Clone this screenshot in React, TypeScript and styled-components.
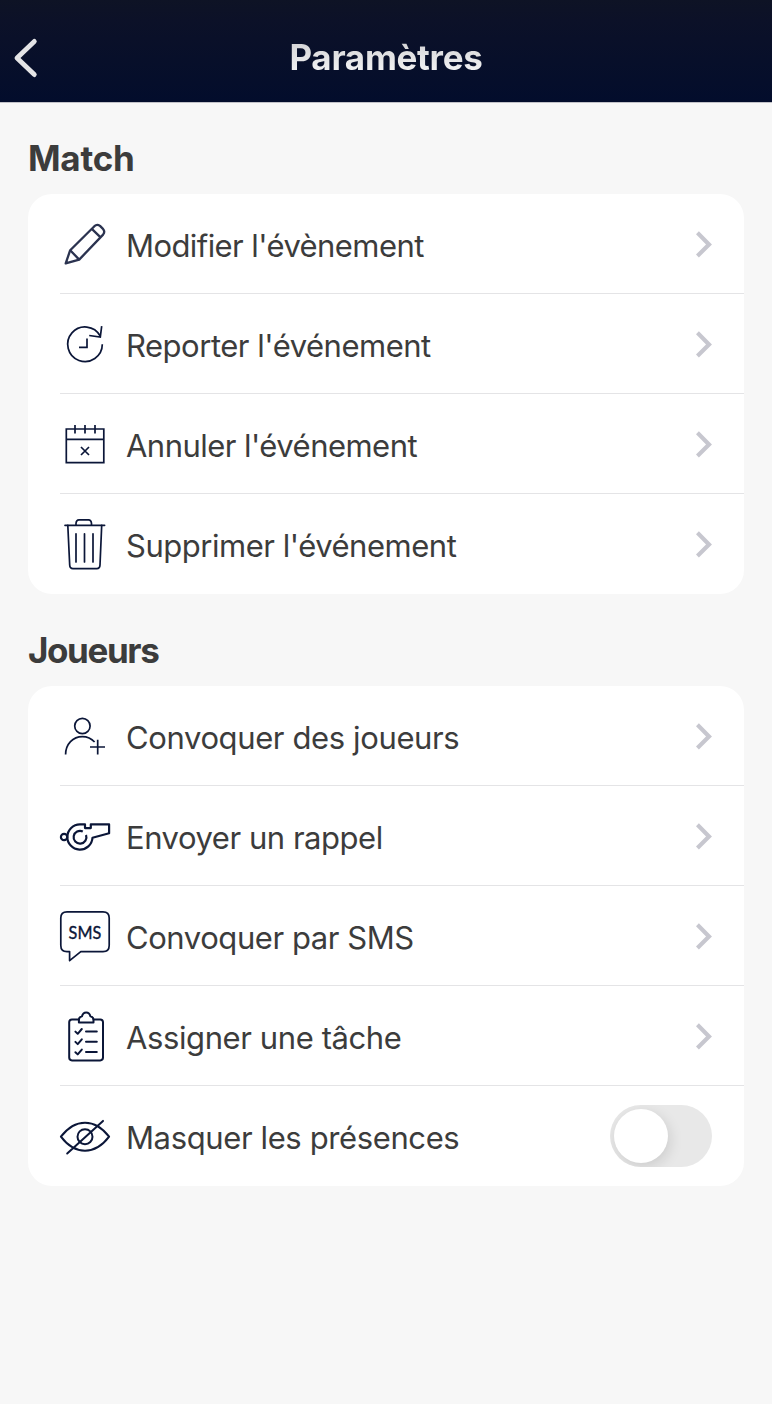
import React, { useState } from 'react';
import styled, { createGlobalStyle } from 'styled-components';

const GlobalStyle = createGlobalStyle`
  * { box-sizing: border-box; }
  body {
    margin: 0;
    background: #f7f7f7;
    font-family: Inter, "Liberation Sans", sans-serif;
    color: #3c3c3c;
  }
`;

const Screen = styled.div`
  min-height: 1404px;
  background: #f7f7f7;
`;

const Header = styled.header`
  display: grid;
  grid-template-columns: 52px 1fr 52px;
  height: 103px;
  padding-top: 12px;
  background: linear-gradient(#0e1325 0, #0c1128 20px, #030d2c 101px);
  border-bottom: 1px solid #c2c2c8;
`;

const BackButton = styled.button`
  border: 0;
  padding: 0;
  background: none;
  height: 90px;
  display: flex;
  align-items: center;
`;

const Title = styled.h1<{ $track: number }>`
  margin: 0;
  text-align: center;
  font-size: 35px;
  font-weight: 700;
  line-height: 90px;
  letter-spacing: ${(p) => p.$track}px;
  color: transparent;
  background: linear-gradient(#d4d4d6 30px, #f2f2f4 60px);
  background-clip: text;
`;

const Content = styled.main`
  margin-top: -1px;
  padding: 0 28px;
`;

const SectionTitle = styled.h2<{ $track: number }>`
  margin: 0;
  height: 92px;
  padding-top: 20px;
  font-size: 35px;
  font-weight: 700;
  line-height: 72px;
  letter-spacing: ${(p) => p.$track}px;
`;

const Card = styled.ul`
  list-style: none;
  margin: 0;
  padding: 0 0 0 32px;
  background: #fff;
  border-radius: 24px;
`;

const Row = styled.li`
  display: flex;
  align-items: center;
  height: 100px;
  padding-right: 32px;
  box-shadow: inset 0 -1px #e4e4e6;
  &:last-child { box-shadow: none; }
`;

const IconBox = styled.svg`
  width: 50px;
  height: 50px;
  flex: none;
  overflow: visible;
  fill: none;
  stroke: #0b1638;
  stroke-width: 1.7;
`;

const Label = styled.span<{ $track: number }>`
  flex: 1;
  padding: 3px 0 0 16px;
  font-size: 31px;
  line-height: 40px;
  letter-spacing: ${(p) => p.$track}px;
  white-space: nowrap;
`;

const Switch = styled.button`
  width: 102px;
  height: 62px;
  padding: 4px;
  border: 0;
  border-radius: 31px;
  background: #e8e8e8;
  overflow: hidden;
  display: flex;
  &[aria-checked='true'] { justify-content: flex-end; background: #0b1638; }
`;

const Thumb = styled.span`
  width: 54px;
  height: 54px;
  border-radius: 50%;
  background: #fff;
  box-shadow: 2px 4px 14px rgba(0, 0, 0, 0.12);
`;

const Chevron = () => (
  <svg width="16" height="28" viewBox="0 -1.4 16 28" fill="none" stroke="#c7c7cf" strokeWidth="4.2">
    <path d="M1.4 1.4 13 13 1.4 24.6" />
  </svg>
);

const icons = {
  edit: (
    <g strokeWidth="2.3" stroke="#2b3350" strokeLinejoin="round">
      <path d="M5.7 44.4 10.2 31.2 34.4 7.2Q37 4.8 40 6.9L43 9.9Q45.4 12.8 43.1 15.6L19.2 40.6Z" />
      <path d="M10.2 31.2 19.2 40.6M31.8 9.9 40.6 18.4" />
    </g>
  ),
  postpone: (
    <path d="M42.3 25.3A17.3 17.3 0 1 1 40.2 17M41.7 7.2 40.3 18.1 29.2 16.5M27 19.5V28.3H19" />
  ),
  cancel: (
    <>
      <path d="M6.3 10H43.8V43.6H6.3ZM6.3 20.4H43.8M15 6V14.6M25 6V14.6M35 6V14.6" />
      <path d="M21 28 29 36M29 28 21 36" />
    </>
  ),
  remove: (
    <g strokeLinecap="round">
      <path d="M5 6.3H44.6M16 6.3V4.5Q16.2 .8 19 .8H28.5Q31.3 .8 31.5 4.5V6.3" />
      <path d="M7.8 6.3 9.7 46Q9.8 49.6 13 49.6H36.8Q39.9 49.6 40 46L41.7 6.3M16 14.8V43M24.5 14.8V43M33 14.8V43" />
    </g>
  ),
  invite: (
    <>
      <circle cx="22.4" cy="15" r="7.7" />
      <path d="M5.6 43.6C5.6 33 13 25.6 22.4 25.6 27.5 25.6 31.7 27.8 34.6 31M37.7 28.8V43.5M30 36H45" />
    </>
  ),
  whistle: (
    <g strokeWidth="2.2" strokeLinejoin="round">
      <circle cx="4.1" cy="26" r="3.2" />
      <path d="M20 13.4H25V17.1H30.8V13.4H49.1V22.3L32.5 26.8A12.6 12.6 0 1 1 20 13.4Z" />
      <path d="M22.8 20.5A6.4 6.4 0 1 0 26 24" />
    </g>
  ),
  sms: (
    <>
      <path
        strokeLinejoin="round"
        d="M7 .8H43Q49.2 .8 49.2 7V34.5Q49.2 40.6 43 40.6H20.8L9.6 49.6V40.6H7Q.8 40.6 .8 34.5V7Q.8 .8 7 .8Z"
      />
      <text
        x="8.6"
        y="27.6"
        textLength="32.6"
        lengthAdjust="spacingAndGlyphs"
        fill="#0b1638"
        strokeWidth="0.4"
        fontSize="18.2"
        fontFamily="Lato, sans-serif"
      >
        SMS
      </text>
    </>
  ),
  task: (
    <g strokeWidth="2" strokeLinecap="round" strokeLinejoin="round">
      <path d="M19 8.4H12Q9.2 8.4 9.2 11.2V46.6Q9.2 49.4 12 49.4H40.2Q43 49.4 43 46.6V11.2Q43 8.4 40.2 8.4H33.5" />
      <path d="M18.9 11.4V8.4Q19.3 5.7 22 5.3 22.8 1.4 26.2 1.4T30.4 5.3Q33 5.7 33.5 8.4V11.4Z" />
      <path d="M15.4 20.6 17.7 22.8 21.8 18M15.4 30.9 17.7 33.1 21.8 28.3M15.4 41.2 17.7 43.4 21.8 38.6M26 20.4H36.8M26 30.7H36.8M26 41H36.8" />
    </g>
  ),
  hide: (
    <g strokeWidth="2" strokeLinecap="round" strokeLinejoin="round">
      <path d="M.9 25.7C15 7 35 7 49.1 25.7 35 44.4 15 44.4 .9 25.7ZM7.2 42.5 43 9.9" />
      <circle cx="25" cy="25.7" r="7.5" />
    </g>
  ),
};

type Item = { icon: keyof typeof icons; label: string; track: number; toggle?: boolean };

const matchItems: Item[] = [
  { icon: 'edit', label: "Modifier l'évènement", track: -0.58 },
  { icon: 'postpone', label: "Reporter l'événement", track: -0.48 },
  { icon: 'cancel', label: "Annuler l'événement", track: -0.53 },
  { icon: 'remove', label: "Supprimer l'événement", track: -0.47 },
];

const playerItems: Item[] = [
  { icon: 'invite', label: 'Convoquer des joueurs', track: -0.38 },
  { icon: 'whistle', label: 'Envoyer un rappel', track: -0.46 },
  { icon: 'sms', label: 'Convoquer par SMS', track: -0.43 },
  { icon: 'task', label: 'Assigner une tâche', track: -0.4 },
  { icon: 'hide', label: 'Masquer les présences', track: -0.38, toggle: true },
];

const SettingsCard = ({ items }: { items: Item[] }) => {
  const [on, setOn] = useState(false);
  return (
    <Card>
      {items.map((item) => (
        <Row key={item.label}>
          <IconBox viewBox="0 0 50 50">{icons[item.icon]}</IconBox>
          <Label $track={item.track}>{item.label}</Label>
          {item.toggle ? (
            <Switch role="switch" aria-checked={on} aria-label={item.label} onClick={() => setOn(!on)}>
              <Thumb />
            </Switch>
          ) : (
            <Chevron />
          )}
        </Row>
      ))}
    </Card>
  );
};

export default function App() {
  return (
    <>
      <GlobalStyle />
      <Screen>
        <Header>
          <BackButton aria-label="Retour">
            <svg width="52" height="90" viewBox="0 12 52 90" fill="none" stroke="#e4e4e6" strokeWidth="4.8" strokeLinecap="round" strokeLinejoin="round">
              <path d="M34.3 41.4 17 58 34.3 74.6" />
            </svg>
          </BackButton>
          <Title $track={-0.3}>Paramètres</Title>
        </Header>
        <Content>
          <SectionTitle $track={-0.25}>Match</SectionTitle>
          <SettingsCard items={matchItems} />
          <SectionTitle $track={-1.4}>Joueurs</SectionTitle>
          <SettingsCard items={playerItems} />
        </Content>
      </Screen>
    </>
  );
}
